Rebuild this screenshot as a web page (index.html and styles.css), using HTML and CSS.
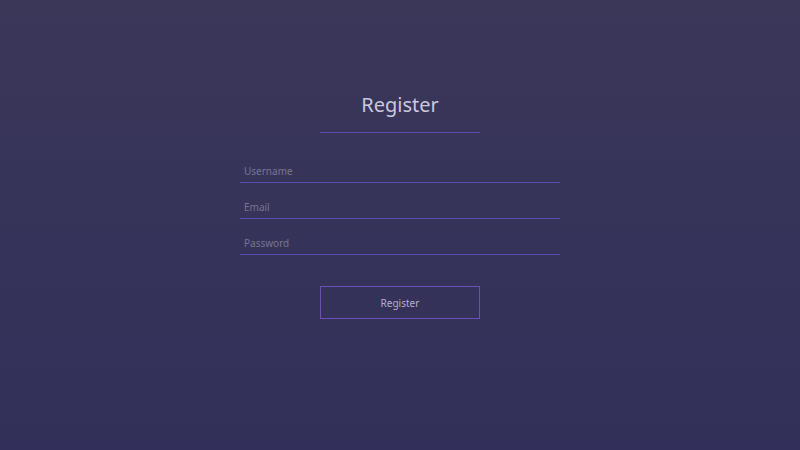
FILE: index.html
```html
<!DOCTYPE html>
<html>
<head>
<meta charset="utf-8">
<link rel="stylesheet" href="styles.css">
</head>
<body>
<div class="page">
  <form class="form">
    <h1 class="title">Register</h1>
    <div class="rule"></div>
    <div class="fields">
      <input class="field" type="text" placeholder="Username">
      <input class="field" type="email" placeholder="Email">
      <input class="field" type="password" placeholder="Password">
    </div>
    <button class="btn" type="button">Register</button>
  </form>
</div>
</body>
</html>
```
FILE: styles.css
```css
html, body {
  margin: 0;
  padding: 0;
  height: 100%;
}
body {
  background: linear-gradient(to bottom, #3a3759 0%, #32305a 100%);
  font-family: "Noto Sans", "DejaVu Sans", sans-serif;
}
.page {
  display: flex;
  justify-content: center;
  padding-top: 91px;
}
.form {
  width: 320px;
  display: flex;
  flex-direction: column;
  align-items: center;
}
.title {
  margin: 0;
  font-size: 20px;
  font-weight: 400;
  color: #c9c8de;
  line-height: 28px;
}
.rule {
  width: 160px;
  height: 1px;
  background: #5a4cae;
  margin-top: 13px;
}
.fields {
  width: 320px;
  display: flex;
  flex-direction: column;
  gap: 16px;
  margin-top: 30px;
}
.field {
  box-sizing: border-box;
  width: 100%;
  height: 20px;
  background: transparent;
  border: none;
  border-bottom: 1px solid #5a4cae;
  padding: 0 4px 4px;
  font-family: inherit;
  font-size: 10px;
  color: #c9c8de;
  outline: none;
}
.field::placeholder {
  color: #77758f;
}
.btn {
  margin-top: 31px;
  width: 160px;
  height: 33px;
  background: transparent;
  border: 1px solid #6a4fb4;
  color: #b3b1c8;
  font-family: inherit;
  font-size: 10px;
  cursor: pointer;
}
```
